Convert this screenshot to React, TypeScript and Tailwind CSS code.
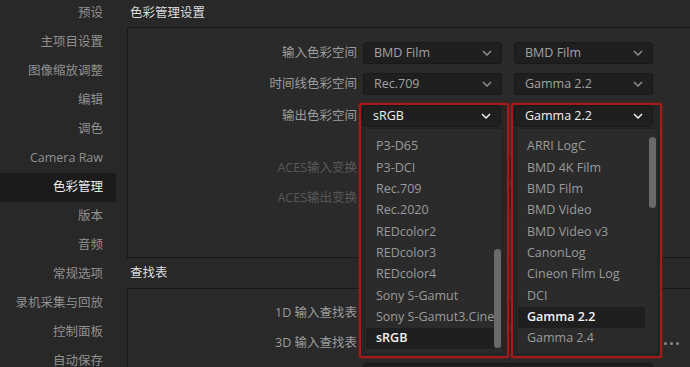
import React from "react";

const F = "font-['Open_Sans','Noto_Sans_CJK_SC',sans-serif]";

const sidebar = [
  "预设",
  "主项目设置",
  "图像缩放调整",
  "编辑",
  "调色",
  "Camera Raw",
  "色彩管理",
  "版本",
  "音频",
  "常规选项",
  "录机采集与回放",
  "控制面板",
  "自动保存",
];

function Chevron({ color = "#8c8c8c" }: { color?: string }) {
  return (
    <svg width="10" height="6" viewBox="0 0 10 6" className="shrink-0">
      <polyline points="1,1 5,5 9,1" fill="none" stroke={color} strokeWidth="1.5" />
    </svg>
  );
}

function Select({
  value,
  w = "w-[139px]",
  active = false,
  chevron = true,
}: {
  value?: string;
  w?: string;
  active?: boolean;
  chevron?: boolean;
}) {
  return (
    <div
      className={`${w} h-[22px] rounded-[3px] border border-[#191919] bg-[#1f1f1f] flex items-center justify-between pl-[10px] pr-[9px] ${
        active ? "text-[#f2f2f2]" : "text-[#a3a3a3]"
      } text-[12.5px]`}
    >
      <span>{value}</span>
      {chevron && <Chevron color={active ? "#f0f0f0" : "#8e8e8e"} />}
    </div>
  );
}

function Label({ children, dim = false }: { children: React.ReactNode; dim?: boolean }) {
  return (
    <div
      className={`w-[235px] pr-[6px] text-right text-[12.5px] ${dim ? "text-[#595959]" : "text-[#9c9c9c]"}`}
    >
      {children}
    </div>
  );
}

function Popup({
  value,
  items,
  selected,
  boxW,
  listW,
  itemW,
  padL,
  thumbTop,
  thumbH,
}: {
  value: string;
  items: string[];
  selected: string;
  boxW: string;
  listW: string;
  itemW: string;
  padL: string;
  thumbTop: string;
  thumbH: string;
}) {
  return (
    <div
      className={`absolute top-[-2px] ${boxW} h-[255px] border-2 border-[#a51b1b] rounded-[2px] bg-[#262626] shadow-[0_0_3px_rgba(200,20,20,0.6)] z-10`}
    >
      <div className="pl-[1px] pt-0">
        <Select value={value} active />
      </div>
      <div
        className={`relative ml-[3px] mt-[1px] ${listW} h-[226px] bg-[#2b2b2b] border border-[#222] pt-[7px] pl-[1px]`}
      >
        {items.map((it) => (
          <div
            key={it}
            className={`${itemW} h-[21.33px] flex items-center ${padL} text-[12.5px] whitespace-nowrap ${
              it === selected ? "bg-[#1f1f1f] text-[#f4f4f4] font-semibold" : "text-[#9a9a9a]"
            }`}
          >
            {it}
          </div>
        ))}
        <div className={`absolute right-[1px] ${thumbTop} w-[7px] ${thumbH} rounded-full bg-[#6a6a6a]`} />
      </div>
    </div>
  );
}

export default function App() {
  return (
    <div className={`w-[690px] h-[367px] overflow-hidden bg-[#282828] flex ${F}`}>
      {/* Sidebar */}
      <div className="w-[116px] shrink-0 flex flex-col mt-[-1px]">
        {sidebar.map((s) => (
          <div
            key={s}
            className={`h-[29px] shrink-0 flex items-center justify-end pr-[13px] text-[12.5px] ${
              s === "色彩管理" ? "bg-[#1b1b1b] text-[#ececec]" : "text-[#909090]"
            }`}
          >
            {s}
          </div>
        ))}
      </div>

      {/* Main */}
      <div className="flex-1 pl-[11px] flex flex-col min-w-0">
        <div className="h-[27px] shrink-0 flex items-center pl-[3px] text-[12.5px] text-[#dcdcdc]">
          色彩管理设置
        </div>
        <div className="h-[231px] shrink-0 w-[600px] border border-[#171717] bg-[#2a2a2a] pt-[14px]">
          <div className="flex items-center">
            <Label>输入色彩空间</Label>
            <Select value="BMD Film" />
            <div className="w-[12px]" />
            <Select value="BMD Film" />
          </div>
          <div className="flex items-center mt-[9px]">
            <Label>时间线色彩空间</Label>
            <Select value="Rec.709" />
            <div className="w-[12px]" />
            <Select value="Gamma 2.2" />
          </div>
          <div className="flex items-center mt-[10px]">
            <Label>输出色彩空间</Label>
            <div className="relative w-[139px] h-[22px]">
              <div className="absolute left-[-4px] top-0">
                <Popup
                  value="sRGB"
                  selected="sRGB"
                  items={[
                    "P3-D65",
                    "P3-DCI",
                    "Rec.709",
                    "Rec.2020",
                    "REDcolor2",
                    "REDcolor3",
                    "REDcolor4",
                    "Sony S-Gamut",
                    "Sony S-Gamut3.Cine",
                    "sRGB",
                  ]}
                  boxW="w-[150px]"
                  listW="w-[139px]"
                  itemW="w-[129px]"
                  padL="pl-[10px]"
                  thumbTop="top-[120px]"
                  thumbH="h-[99px]"
                />
              </div>
            </div>
            <div className="w-[12px]" />
            <div className="relative w-[139px] h-[22px]">
              <div className="absolute left-[-3px] top-0">
                <Popup
                  value="Gamma 2.2"
                  selected="Gamma 2.2"
                  items={[
                    "ARRI LogC",
                    "BMD 4K Film",
                    "BMD Film",
                    "BMD Video",
                    "BMD Video v3",
                    "CanonLog",
                    "Cineon Film Log",
                    "DCI",
                    "Gamma 2.2",
                    "Gamma 2.4",
                  ]}
                  boxW="w-[151px]"
                  listW="w-[142px]"
                  itemW="w-[127px]"
                  padL="pl-[9px]"
                  thumbTop="top-[8px]"
                  thumbH="h-[71px]"
                />
              </div>
            </div>
          </div>
          <div className="flex items-center mt-[30px]">
            <Label dim>ACES输入变换</Label>
            <Select w="w-[290px]" />
          </div>
          <div className="flex items-center mt-[8px]">
            <Label dim>ACES输出变换</Label>
            <Select w="w-[290px]" />
          </div>
        </div>
        <div className="h-[30px] shrink-0 flex items-center pl-[3px] text-[12.5px] text-[#dcdcdc]">
          查找表
        </div>
        <div className="h-[200px] shrink-0 w-[600px] border border-[#171717] bg-[#2a2a2a] pt-[13px]">
          <div className="flex items-center">
            <Label>1D 输入查找表</Label>
            <Select w="w-[290px]" />
          </div>
          <div className="flex items-center mt-[8px]">
            <Label>3D 输入查找表</Label>
            <Select w="w-[290px]" />
            <div className="ml-[11px] flex gap-[3px]">
              <span className="w-[3px] h-[3px] rounded-full bg-[#8a8a8a]" />
              <span className="w-[3px] h-[3px] rounded-full bg-[#8a8a8a]" />
              <span className="w-[3px] h-[3px] rounded-full bg-[#8a8a8a]" />
            </div>
          </div>
          <div className="flex items-center mt-[9px]">
            <Label>1D 输出查找表</Label>
            <Select w="w-[290px]" />
          </div>
        </div>
      </div>
    </div>
  );
}
